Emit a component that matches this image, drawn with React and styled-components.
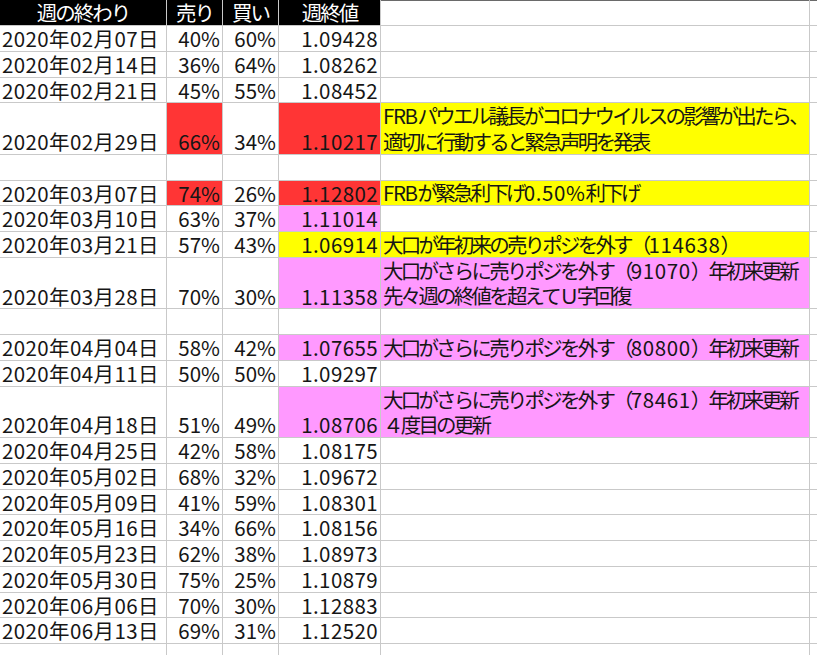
import React from "react";
import styled, { createGlobalStyle } from "styled-components";

const fills = {
  red: "#ff3535",
  yellow: "#ffff00",
  pink: "#ff99ff",
};

const rows = [
  { date: "2020年02月07日", sell: "40%", buy: "60%", close: "1.09428" },
  { date: "2020年02月14日", sell: "36%", buy: "64%", close: "1.08262" },
  { date: "2020年02月21日", sell: "45%", buy: "55%", close: "1.08452" },
  {
    date: "2020年02月29日", sell: "66%", buy: "34%", close: "1.10217", tall: true,
    sellFill: "red", closeFill: "red", noteFill: "yellow",
    note: ["FRBパウエル議長がコロナウイルスの影響が出たら、", "適切に行動すると緊急声明を発表"],
  },
  { blank: true },
  {
    date: "2020年03月07日", sell: "74%", buy: "26%", close: "1.12802",
    sellFill: "red", closeFill: "red", noteFill: "yellow",
    note: ["FRBが緊急利下げ0.50%利下げ"],
  },
  { date: "2020年03月10日", sell: "63%", buy: "37%", close: "1.11014", closeFill: "pink" },
  {
    date: "2020年03月21日", sell: "57%", buy: "43%", close: "1.06914",
    closeFill: "yellow", noteFill: "yellow",
    note: ["大口が年初来の売りポジを外す（114638）"],
  },
  {
    date: "2020年03月28日", sell: "70%", buy: "30%", close: "1.11358", tall: true,
    closeFill: "pink", noteFill: "pink",
    note: ["大口がさらに売りポジを外す（91070）年初来更新", "先々週の終値を超えてＵ字回復"],
  },
  { blank: true },
  {
    date: "2020年04月04日", sell: "58%", buy: "42%", close: "1.07655",
    closeFill: "pink", noteFill: "pink",
    note: ["大口がさらに売りポジを外す（80800）年初来更新"],
  },
  { date: "2020年04月11日", sell: "50%", buy: "50%", close: "1.09297" },
  {
    date: "2020年04月18日", sell: "51%", buy: "49%", close: "1.08706", tall: true,
    closeFill: "pink", noteFill: "pink",
    note: ["大口がさらに売りポジを外す（78461）年初来更新", "４度目の更新"],
  },
  { date: "2020年04月25日", sell: "42%", buy: "58%", close: "1.08175" },
  { date: "2020年05月02日", sell: "68%", buy: "32%", close: "1.09672" },
  { date: "2020年05月09日", sell: "41%", buy: "59%", close: "1.08301" },
  { date: "2020年05月16日", sell: "34%", buy: "66%", close: "1.08156" },
  { date: "2020年05月23日", sell: "62%", buy: "38%", close: "1.08973" },
  { date: "2020年05月30日", sell: "75%", buy: "25%", close: "1.10879" },
  { date: "2020年06月06日", sell: "70%", buy: "30%", close: "1.12883" },
  { date: "2020年06月13日", sell: "69%", buy: "31%", close: "1.12520" },
  { blank: true },
];

const GlobalStyle = createGlobalStyle`
  html, body {
    margin: 0;
    padding: 0;
    background: #ffffff;
    overflow: hidden;
  }
`;

const Sheet = styled.div`
  display: grid;
  grid-template-columns: 166px 55px 55px 101px 428px 1fr;
  grid-template-rows: 25px;
  grid-auto-rows: 24.75px;
  gap: 1px;
  width: 817px;
  height: 655px;
  overflow: hidden;
  background: #c9c9c9;
  font-family: "Noto Sans CJK JP", "Noto Sans", sans-serif;
  font-size: 20.5px;
  color: #161616;
`;

const HeadCell = styled.div`
  display: flex;
  align-items: center;
  justify-content: center;
  background: ${props => props.$dark ? "#000000" : "#ffffff"};
  color: #ffffff;
  line-height: 25px;
  letter-spacing: -2px;
  white-space: nowrap;
  border-top: ${props => props.$dark ? "none" : "1px solid #6a6a6a"};
`;

const Cell = styled.div`
  display: flex;
  align-items: flex-end;
  justify-content: ${props => props.$right ? "flex-end" : "flex-start"};
  grid-row: ${props => props.$tall ? "span 2" : "auto"};
  padding: 0 2px;
  background: ${props => props.$fill ? fills[props.$fill] : "#ffffff"};
  line-height: 24.75px;
  letter-spacing: ${props => props.$wide ? "0.4px" : "0"};
  white-space: nowrap;
  overflow: hidden;
`;

const NoteCell = styled(Cell)`
  flex-direction: column;
  align-items: flex-start;
  justify-content: flex-end;
  letter-spacing: -2.8px;
  line-height: 25.25px;
`;

const Digits = styled.span`
  letter-spacing: 0.6px;
`;

const Letters = styled.span`
  letter-spacing: -1.4px;
  margin-right: 1px;
`;

const NoteLine = ({ text }) => (
  <span>
    {text.split(/([0-9.%]+|[A-Za-z]+)/).map((part, i) => {
      if (i % 2 === 0) return part;
      return /[A-Za-z]/.test(part)
        ? <Letters key={i}>{part}</Letters>
        : <Digits key={i}>{part}</Digits>;
    })}
  </span>
);

const App = () => {
  return (
    <>
      <GlobalStyle />
      <Sheet>
        <HeadCell $dark>週の終わり</HeadCell>
        <HeadCell $dark>売り</HeadCell>
        <HeadCell $dark>買い</HeadCell>
        <HeadCell $dark>週終値</HeadCell>
        <HeadCell />
        <HeadCell />

        {rows.map((row, i) => row.blank ? (
          <React.Fragment key={i}>
            <Cell />
            <Cell />
            <Cell />
            <Cell />
            <Cell />
            <Cell />
          </React.Fragment>
        ) : (
          <React.Fragment key={i}>
            <Cell $tall={row.tall} $wide>{row.date}</Cell>
            <Cell $tall={row.tall} $right $fill={row.sellFill}>{row.sell}</Cell>
            <Cell $tall={row.tall} $right>{row.buy}</Cell>
            <Cell $tall={row.tall} $right $wide $fill={row.closeFill}>{row.close}</Cell>
            <NoteCell $tall={row.tall} $fill={row.noteFill}>
              {(row.note || []).map(line => <NoteLine key={line} text={line} />)}
            </NoteCell>
            <Cell $tall={row.tall} />
          </React.Fragment>
        ))}
      </Sheet>
    </>
  );
};

export default App;
